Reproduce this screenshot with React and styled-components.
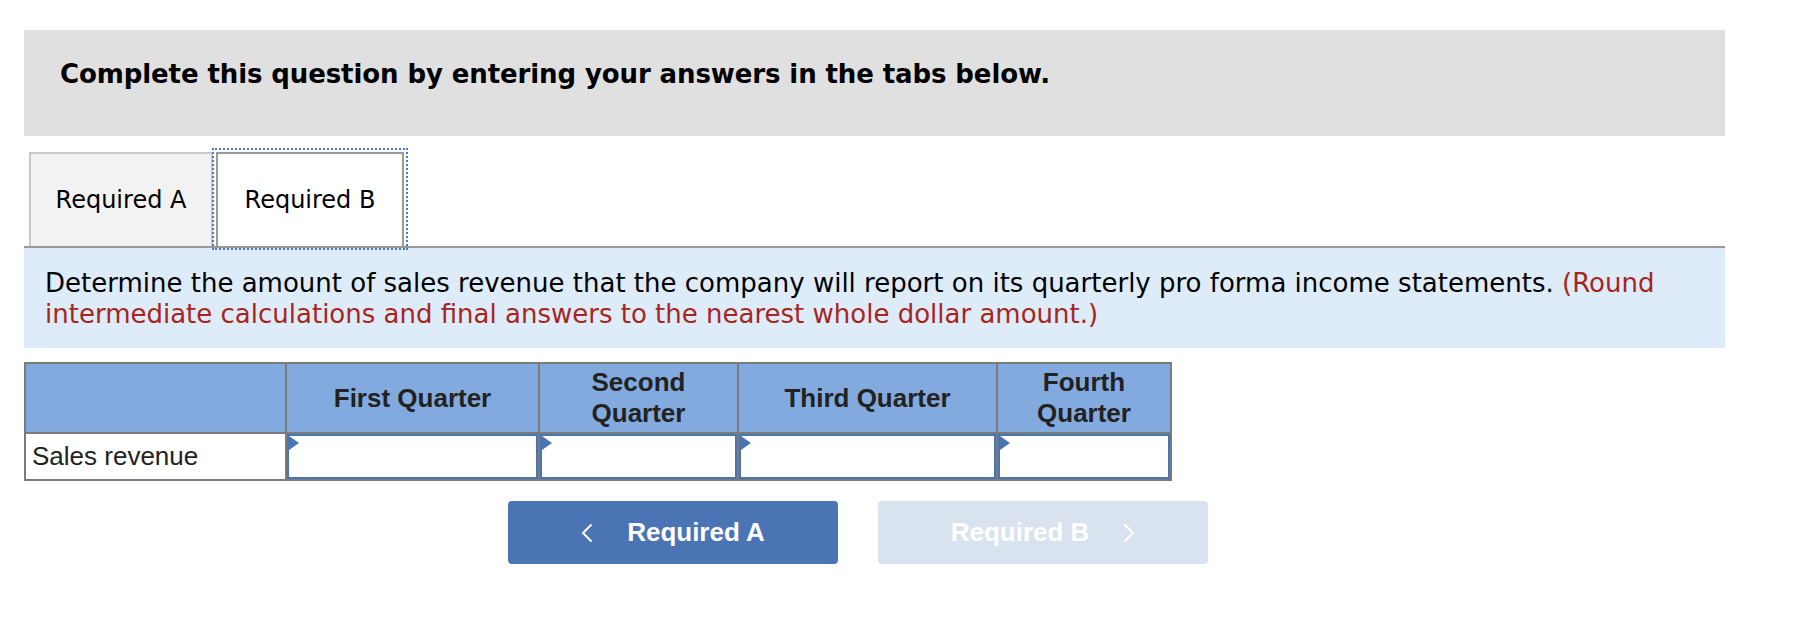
import React from 'react'
import styled, { createGlobalStyle } from 'styled-components'

const GlobalStyle = createGlobalStyle`
body {
  margin: 0;
  background: #fff;
}
* {
  box-sizing: border-box;
}
`

const Page = styled.div`
width: 1725px;
padding: 30px 0 0 24px;
`

const Banner = styled.div`
background: #e0e0e0;
padding: 29px 36px 47px;
font: bold 26px/30px "DejaVu Sans", Verdana, sans-serif;
letter-spacing: -0.1px;
color: #000;
`

const TabBar = styled.div`
display: flex;
gap: 3px;
margin-top: 16px;
padding-left: 5px;
border-bottom: 2px solid #999;
`

const Tab = styled.button`
width: ${props => props.$active ? 188 : 184}px;
height: 94px;
padding: 0;
font: 24px "DejaVu Sans", Verdana, sans-serif;
color: #000;
background: ${props => props.$active ? '#fff' : '#f2f2f2'};
border: 2px solid ${props => props.$active ? '#999' : '#c8c8c8'};
border-bottom: none;
outline: ${props => props.$active ? '2px dotted #4a7bc4' : 'none'};
outline-offset: 2px;
`

const Prompt = styled.div`
background: #deebf8;
padding: 20px 21px 18px;
font: 26px/31px "DejaVu Sans", Verdana, sans-serif;
color: #000;
`

const Note = styled.span`
color: #a6261f;
`

const Sheet = styled.table`
margin-top: 14px;
width: 1146px;
border-collapse: collapse;
table-layout: fixed;
font-family: "Liberation Sans", Arial, sans-serif;
color: #222;
`

const HeadCell = styled.th`
height: 70px;
padding: 0 10px;
background: #82aadf;
border: 2px solid #7b7b7b;
font-size: 26px;
line-height: 31px;
font-weight: bold;
text-align: center;
vertical-align: middle;
`

const LabelCell = styled.td`
height: 47px;
padding: 0 6px;
border: 2px solid #7b7b7b;
font-size: 26px;
text-align: left;
vertical-align: middle;
`

const EntryCell = styled.td`
height: 47px;
padding: 0;
border: 2px solid #7b7b7b;
`

const Entry = styled.div`
position: relative;
height: 45px;
border: 2px solid #4a75b5;
background: #fff;
&::before {
  content: "";
  position: absolute;
  top: 0;
  left: 0;
  border-top: 7px solid transparent;
  border-bottom: 7px solid transparent;
  border-left: 10px solid #4a75b5;
}
`

const EntryInput = styled.input`
width: 100%;
height: 100%;
border: none;
outline: none;
background: transparent;
font: 26px "Liberation Sans", Arial, sans-serif;
text-align: right;
padding: 0 6px;
`

const Nav = styled.div`
display: flex;
gap: 40px;
margin-top: 20px;
padding-left: 484px;
`

const NavButton = styled.button`
width: 330px;
height: 63px;
border: none;
border-radius: 4px;
background: ${props => props.disabled ? '#d9e3ef' : '#4a74b3'};
color: #fff;
font: bold 26px "Liberation Sans", Arial, sans-serif;
display: flex;
align-items: center;
justify-content: center;
gap: 34px;
padding: 0;
`

const Chevron = ({ dir }) => (
    <svg width="12" height="20" viewBox="0 0 12 20">
        <path
            d={dir === 'left' ? 'M10.5 1.5 L2 10 L10.5 18.5' : 'M1.5 1.5 L10 10 L1.5 18.5'}
            fill="none"
            stroke="#fff"
            strokeWidth="2"
        />
    </svg>
)

const quarters = [
    { label: 'First Quarter', width: 253 },
    { label: 'Second Quarter', width: 199 },
    { label: 'Third Quarter', width: 259 },
    { label: 'Fourth Quarter', width: 174 },
]

function App() {
    return (
        <>
            <GlobalStyle />
            <Page>
                <Banner>Complete this question by entering your answers in the tabs below.</Banner>

                <TabBar>
                    <Tab>Required A</Tab>
                    <Tab $active>Required B</Tab>
                </TabBar>

                <Prompt>
                    Determine the amount of sales revenue that the company will report on its quarterly pro forma income statements. <Note>(Round<br />intermediate calculations and final answers to the nearest whole dollar amount.)</Note>
                </Prompt>

                <Sheet>
                    <colgroup>
                        <col style={{ width: 261 }} />
                        {quarters.map(q => <col key={q.label} style={{ width: q.width }} />)}
                    </colgroup>
                    <thead>
                        <tr>
                            <HeadCell />
                            {quarters.map(q => <HeadCell key={q.label}>{q.label}</HeadCell>)}
                        </tr>
                    </thead>
                    <tbody>
                        <tr>
                            <LabelCell>Sales revenue</LabelCell>
                            {quarters.map(q => (
                                <EntryCell key={q.label}>
                                    <Entry>
                                        <EntryInput type="text" aria-label={q.label} />
                                    </Entry>
                                </EntryCell>
                            ))}
                        </tr>
                    </tbody>
                </Sheet>

                <Nav>
                    <NavButton>
                        <Chevron dir="left" />
                        Required A
                    </NavButton>
                    <NavButton disabled>
                        Required B
                        <Chevron dir="right" />
                    </NavButton>
                </Nav>
            </Page>
        </>
    )
}

export default App
